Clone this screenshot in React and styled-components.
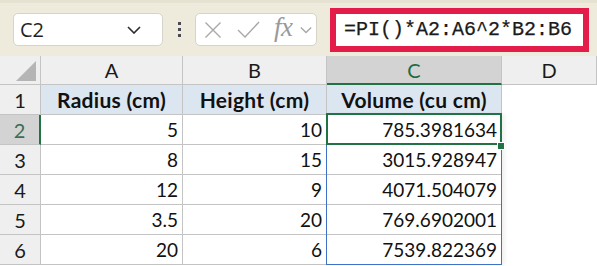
import React from "react";
import styled, { createGlobalStyle } from "styled-components";

const Global = createGlobalStyle`
  html, body { margin: 0; padding: 0; background: #ffffff; }
  body { font-family: Lato, "Open Sans", sans-serif; overflow: hidden; }
`;

const Page = styled.div`
  width: 597px;
  height: 266px;
  overflow: hidden;
  background: #fff;
`;

const Toolbar = styled.div`
  height: 56px;
  box-sizing: border-box;
  background: #eeebdd;
  border-top: 3px solid #e6e2d2;
  display: flex;
  align-items: center;
  padding-left: 13px;
`;

const NameBox = styled.div`
  width: 150px;
  height: 33px;
  box-sizing: border-box;
  background: #fff;
  border: 1px solid #d6d3c8;
  border-radius: 5px;
  display: flex;
  align-items: center;
  justify-content: space-between;
  padding: 0 21px 0 6px;
  font-family: "Open Sans", sans-serif;
  font-size: 20px;
  color: #1f1f1f;
`;

const Dots = styled.div`
  width: 32px;
  display: flex;
  flex-direction: column;
  align-items: center;
  gap: 3px;
  & span {
    width: 3px;
    height: 3px;
    background: #4a4a55;
  }
`;

const FxBox = styled.div`
  width: 122px;
  height: 33px;
  box-sizing: border-box;
  background: #fff;
  border: 1px solid #d6d3c8;
  border-radius: 5px;
  display: flex;
  align-items: center;
  padding-left: 8px;
`;

const IconSlot = styled.span`
  display: flex;
  align-items: center;
  margin-right: ${(p) => p.$gap || 0}px;
`;

const Fx = styled.span`
  font-family: "Liberation Serif", serif;
  font-style: italic;
  font-size: 27px;
  color: #9a9a9a;
  margin-top: -4px;
  margin-right: 7px;
  letter-spacing: -0.5px;
`;

const FormulaInput = styled.div`
  margin-left: 13px;
  width: 259px;
  height: 44px;
  box-sizing: border-box;
  border: 6px solid #e31c4a;
  background: #fff;
  display: flex;
  align-items: center;
  padding-left: 8px;
  font-family: "Liberation Mono", "DejaVu Sans Mono", monospace;
  font-size: 20px;
  color: #1b1b1b;
  -webkit-text-stroke: 0.25px #1b1b1b;
`;

const GridWrap = styled.div`
  position: relative;
`;

const Grid = styled.div`
  display: grid;
  grid-template-columns: 41px 142px 144px 175px 95px;
  grid-template-rows: 29px repeat(6, 30px);
`;

const Cell = styled.div`
  box-sizing: border-box;
  border-right: 1px solid ${(p) => (p.$noLine ? "transparent" : "#c4c4c4")};
  border-bottom: 1px solid ${(p) => (p.$noLine ? "transparent" : "#c4c4c4")};
  display: flex;
  align-items: center;
  justify-content: ${(p) => p.$align || "flex-end"};
  padding: 0 4px;
  font-size: ${(p) => (p.$bold ? 21 : 19)}px;
  letter-spacing: ${(p) => (p.$bold ? "0.3px" : "0")};
  color: #111;
  font-weight: ${(p) => (p.$bold ? 700 : 400)};
  background: ${(p) => p.$bg || "#fff"};
  white-space: nowrap;
`;

const ColHead = styled(Cell)`
  justify-content: center;
  background: ${(p) => (p.$sel ? "#d3d3d3" : "#efefef")};
  color: ${(p) => (p.$sel ? "#1d6b41" : "#1a1a1a")};
  border-bottom: ${(p) => (p.$sel ? "2px solid #217346" : "1px solid #c4c4c4")};
  padding-top: ${(p) => (p.$sel ? "1px" : "0")};
  font-size: 20px;
`;

const RowHead = styled(Cell)`
  justify-content: center;
  background: ${(p) => (p.$sel ? "#d3d3d3" : "#efefef")};
  color: ${(p) => (p.$sel ? "#3d6b53" : "#1a1a1a")};
  border-right: ${(p) => (p.$sel ? "2px solid #217346" : "1px solid #c4c4c4")};
  font-size: 20px;
`;

const Corner = styled(Cell)`
  background: #efefef;
  align-items: flex-end;
  padding: 0 4px 3px 0;
`;

const RangeBox = styled.div`
  position: absolute;
  left: 326px;
  width: 176px;
  height: 151px;
  box-sizing: border-box;
  border: 1px solid #3f72c6;
  pointer-events: none;
  box-shadow: 3px 0 4px rgba(0, 0, 0, 0.06);
`;

const ActiveCell = styled.div`
  position: absolute;
  left: 326px;
  width: 176px;
  height: 32px;
  box-sizing: border-box;
  border: 2px solid #217346;
  pointer-events: none;
`;

const Handle = styled.div`
  position: absolute;
  left: 498px;
  width: 6px;
  height: 6px;
  background: #217346;
  border: 1px solid #fff;
  box-sizing: content-box;
  margin: -1px;
`;

const rows = [
  [5, 10, "785.3981634"],
  [8, 15, "3015.928947"],
  [12, 9, "4071.504079"],
  [3.5, 20, "769.6902001"],
  [20, 6, "7539.822369"],
];

const Chevron = ({ color = "#2b2b2b", w = 14 }) => (
  <svg width={w} height={8} viewBox="0 0 14 8" fill="none">
    <path d="M1 1l6 6 6-6" stroke={color} strokeWidth="1.6" />
  </svg>
);

export default function App() {
  return (
    <Page>
      <Global />
      <Toolbar>
        <NameBox>
          <span>C2</span>
          <Chevron />
        </NameBox>
        <Dots>
          <span />
          <span />
          <span />
        </Dots>
        <FxBox>
          <IconSlot $gap={15}>
            <svg width="18" height="18" viewBox="0 0 18 18">
              <path d="M1.5 1.5l15 15M16.5 1.5l-15 15" stroke="#a8a8a8" strokeWidth="1.4" />
            </svg>
          </IconSlot>
          <IconSlot $gap={14}>
            <svg width="23" height="17" viewBox="0 0 23 17">
              <path d="M1 9l7 7L22 1" stroke="#a8a8a8" strokeWidth="1.4" fill="none" />
            </svg>
          </IconSlot>
          <Fx>fx</Fx>
          <Chevron color="#a8a8a8" w={12} />
        </FxBox>
        <FormulaInput>=PI()*A2:A6^2*B2:B6</FormulaInput>
      </Toolbar>
      <GridWrap>
        <Grid>
          <Corner>
            <svg width="20" height="20" viewBox="0 0 20 20">
              <path d="M20 0V20H0Z" fill="#b5b5b5" />
            </svg>
          </Corner>
          <ColHead>A</ColHead>
          <ColHead>B</ColHead>
          <ColHead $sel>C</ColHead>
          <ColHead>D</ColHead>

          <RowHead>1</RowHead>
          <Cell $align="center" $bold $bg="#dce6f1">Radius (cm)</Cell>
          <Cell $align="center" $bold $bg="#dce6f1">Height (cm)</Cell>
          <Cell $align="center" $bold $bg="#dce6f1">Volume (cu cm)</Cell>
          <Cell $noLine />

          {rows.map((r, i) => (
            <React.Fragment key={i}>
              <RowHead $sel={i === 0}>{i + 2}</RowHead>
              <Cell>{r[0]}</Cell>
              <Cell>{r[1]}</Cell>
              <Cell>{r[2]}</Cell>
              <Cell $noLine />
            </React.Fragment>
          ))}
        </Grid>
        <RangeBox style={{ top: 58 }} />
        <ActiveCell style={{ top: 57 }} />
        <Handle style={{ top: 87 }} />
      </GridWrap>
    </Page>
  );
}
